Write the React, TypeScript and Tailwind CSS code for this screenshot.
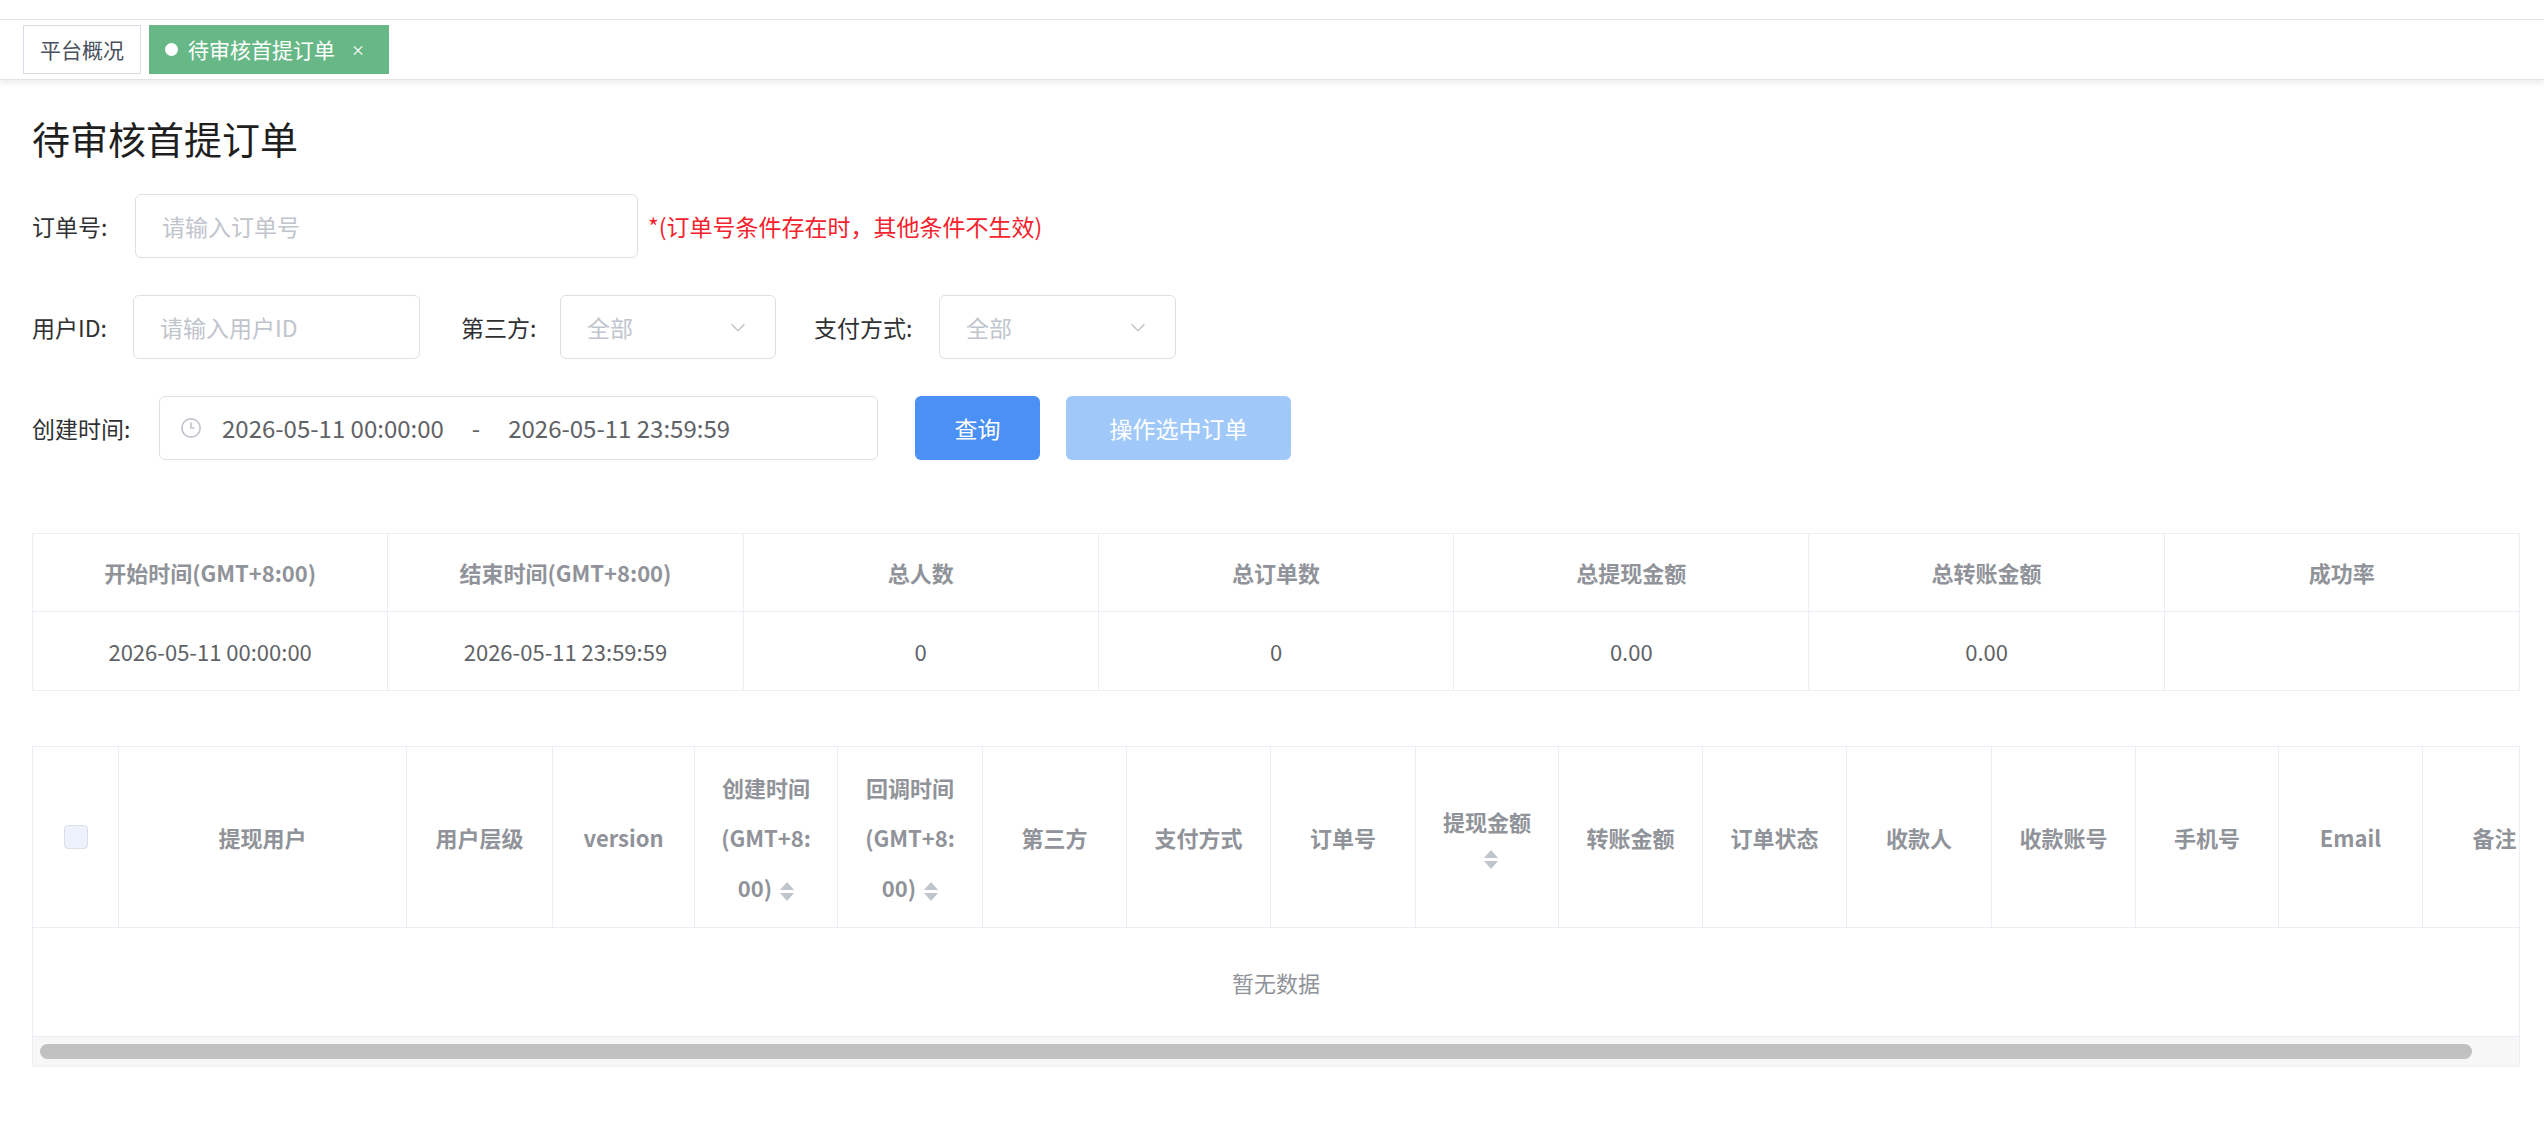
import React from "react";

const F = { fontFamily: '"Noto Sans CJK SC", "Noto Sans", sans-serif' };

function Caret() {
  return (
    <span className="inline-flex flex-col items-center ml-2 align-middle gap-[3px]">
      <span className="w-0 h-0 border-l-[7px] border-r-[7px] border-b-[8px] border-l-transparent border-r-transparent border-b-[#c0c4cc]" />
      <span className="w-0 h-0 border-l-[7px] border-r-[7px] border-t-[8px] border-l-transparent border-r-transparent border-t-[#c0c4cc]" />
    </span>
  );
}

function Chevron() {
  return (
    <svg width="22" height="22" viewBox="0 0 24 24" fill="none" stroke="#c0c4cc" strokeWidth="1.6">
      <path d="M5 9l7 7 7-7" />
    </svg>
  );
}

const summaryHeads = ["开始时间(GMT+8:00)", "结束时间(GMT+8:00)", "总人数", "总订单数", "总提现金额", "总转账金额", "成功率"];
const summaryVals = ["2026-05-11 00:00:00", "2026-05-11 23:59:59", "0", "0", "0.00", "0.00", ""];

export default function App() {
  const cols: { w: number; node: React.ReactNode }[] = [
    { w: 288, node: "提现用户" },
    { w: 146, node: "用户层级" },
    { w: 142, node: "version" },
    { w: 143, node: <span className="leading-[50px]">创建时间<br />(GMT+8:<br />00)<Caret /></span> },
    { w: 145, node: <span className="leading-[50px]">回调时间<br />(GMT+8:<br />00)<Caret /></span> },
    { w: 144, node: "第三方" },
    { w: 144, node: "支付方式" },
    { w: 145, node: "订单号" },
    { w: 143, node: <span className="flex flex-col items-center gap-3">提现金额<Caret /></span> },
    { w: 144, node: "转账金额" },
    { w: 144, node: "订单状态" },
    { w: 145, node: "收款人" },
    { w: 144, node: "收款账号" },
    { w: 143, node: "手机号" },
    { w: 144, node: "Email" },
    { w: 144, node: "备注" },
  ];
  return (
    <div style={F} className="w-[2544px] h-[1142px] bg-white overflow-hidden text-[#303133]">
      <div className="h-[20px] border-b border-[#e6e6e6]" />
      <div className="h-[60px] flex items-center gap-[8px] px-[23px] shadow-[0_3px_6px_rgba(0,0,0,0.08)] border-b border-[#e4e4e4]">
        <div className="h-[49px] px-[16px] flex items-center border border-[#d8dce5] text-[21px] text-[#495060]">平台概况</div>
        <div className="h-[49px] w-[240px] px-[16px] flex items-center bg-[#67b886] text-white text-[21px]">
          <span className="w-[13px] h-[13px] rounded-full bg-white mr-[10px]" />待审核首提订单<span className="ml-[16px] text-[14px]">×</span>
        </div>
      </div>

      <div className="px-[32px]">
        <h1 className="text-[38px] mt-[32px] leading-[52px] text-[#1f1f1f]">待审核首提订单</h1>

        <div className="flex items-center h-[64px] mt-[30px] text-[23px]">
          <span className="w-[103px]">订单号:</span>
          <div className="w-[503px] h-[64px] border border-[#dcdfe6] rounded-[6px] flex items-center px-[26px] text-[#c0c4cc]">请输入订单号</div>
          <span className="ml-[10px] text-[#f5222d]">*(订单号条件存在时，其他条件不生效)</span>
        </div>

        <div className="flex items-center h-[64px] mt-[37px] text-[23px]">
          <span className="w-[101px]">用户ID:</span>
          <div className="w-[287px] h-[64px] border border-[#dcdfe6] rounded-[6px] flex items-center px-[26px] text-[#c0c4cc]">请输入用户ID</div>
          <span className="ml-[41px] w-[99px]">第三方:</span>
          <div className="w-[216px] h-[64px] border border-[#dcdfe6] rounded-[6px] flex items-center justify-between px-[26px] text-[#c0c4cc]">全部<Chevron /></div>
          <span className="ml-[38px] w-[125px]">支付方式:</span>
          <div className="w-[237px] h-[64px] border border-[#dcdfe6] rounded-[6px] flex items-center justify-between px-[26px] text-[#c0c4cc]">全部<Chevron /></div>
        </div>

        <div className="flex items-center h-[64px] mt-[37px] text-[23px]">
          <span className="w-[127px]">创建时间:</span>
          <div className="w-[719px] h-[64px] border border-[#dcdfe6] rounded-[6px] flex items-center px-[20px] text-[#606266] text-[24px]">
            <svg width="22" height="22" viewBox="0 0 24 24" fill="none" stroke="#c0c4cc" strokeWidth="1.8"><circle cx="12" cy="12" r="10" /><path d="M12 6v6h4" /></svg>
            <span className="ml-[20px]">2026-05-11 00:00:00</span>
            <span className="mx-[28px]">-</span>
            <span>2026-05-11 23:59:59</span>
          </div>
          <button className="ml-[37px] w-[125px] h-[64px] rounded-[6px] bg-[#4a90f5] text-white">查询</button>
          <button className="ml-[26px] w-[225px] h-[64px] rounded-[6px] bg-[#a0c9f9] text-white">操作选中订单</button>
        </div>

        <div className="mt-[73px] w-[2488px] border border-[#ebeef5] text-[22px]">
          <div className="flex h-[78px] border-b border-[#ebeef5] font-bold text-[#909399]">
            {summaryHeads.map((h, i) => (
              <div key={i} className={`flex-1 flex items-center justify-center ${i < 6 ? "border-r border-[#ebeef5]" : ""}`}>{h}</div>
            ))}
          </div>
          <div className="flex h-[78px] text-[#606266]">
            {summaryVals.map((h, i) => (
              <div key={i} className={`flex-1 flex items-center justify-center ${i < 6 ? "border-r border-[#ebeef5]" : ""}`}>{h}</div>
            ))}
          </div>
        </div>

        <div className="mt-[55px] w-[2488px] border border-[#ebeef5] text-[22px] overflow-hidden">
          <div className="flex h-[181px] border-b border-[#ebeef5] font-bold text-[#909399]">
            <div className="w-[86px] shrink-0 border-r border-[#ebeef5] flex items-center justify-center">
              <span className="w-[24px] h-[24px] rounded-[4px] border border-[#dcdfe6] bg-[#edf2fc]" />
            </div>
            {cols.map((c, i) => (
              <div key={i} style={{ width: c.w }} className="shrink-0 border-r border-[#ebeef5] flex items-center justify-center text-center">{c.node}</div>
            ))}
          </div>
          <div className="h-[108px] flex items-center justify-center text-[#909399]">暂无数据</div>
          <div className="h-[30px] bg-[#f7f7f7] border-t border-[#ebeef5] flex items-center px-[7px]">
            <div className="w-[2432px] h-[15px] rounded-full bg-[#c1c1c1]" />
          </div>
        </div>
      </div>
    </div>
  );
}
